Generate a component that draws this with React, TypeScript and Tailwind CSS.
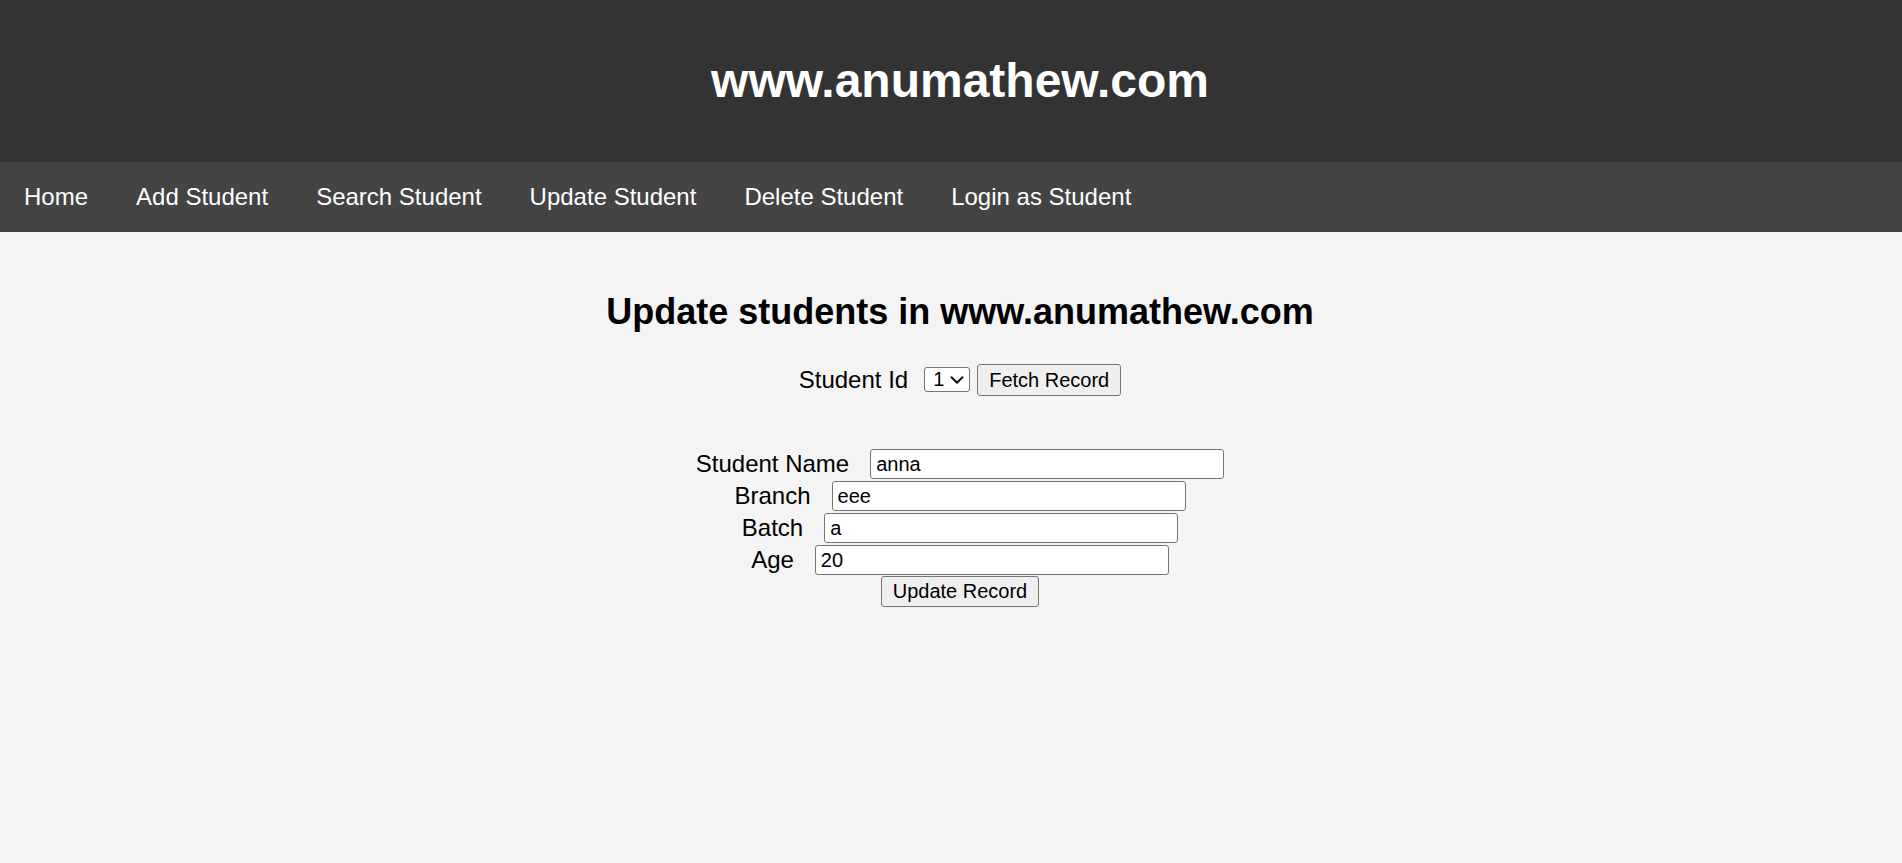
import { ChevronDown } from 'lucide-react';

const navLinks = ['Home', 'Add Student', 'Search Student', 'Update Student', 'Delete Student', 'Login as Student'];

const fields = [
  { label: 'Student Name', value: 'anna' },
  { label: 'Branch', value: 'eee' },
  { label: 'Batch', value: 'a' },
  { label: 'Age', value: '20' },
];

export default function App() {
  return (
    <div className="w-full min-h-screen overflow-hidden bg-[#f4f4f4] font-['Liberation_Sans',Arial,sans-serif] text-black">
      <div className="w-[1920px]">
        {/* Site header */}
        <header className="h-[162px] bg-[#333333] flex items-center justify-center">
          <h1 className="text-[48px] leading-[56px] font-bold text-white">www.anumathew.com</h1>
        </header>

        {/* Navigation */}
        <nav className="h-[70px] bg-[#444444] flex items-center">
          {navLinks.map((link) => (
            <a key={link} href="#" className="px-6 text-[24px] leading-[28px] text-white">
              {link}
            </a>
          ))}
        </nav>

        {/* Update form */}
        <main className="flex flex-col items-center pt-[59px]">
          <h2 className="text-[36px] leading-[42px] font-bold">Update students in www.anumathew.com</h2>

          <div className="mt-[31px] h-[32px] flex items-center">
            <span className="text-[24px] leading-[28px]">Student Id</span>
            <div className="relative ml-[16px]">
              <select
                defaultValue="1"
                className="appearance-none h-[25px] w-[46px] pl-[8px] bg-white border border-[#767676] rounded-[3px] text-[20px] leading-[23px] text-black"
              >
                <option value="1">1</option>
                <option value="2">2</option>
              </select>
              <ChevronDown
                className="absolute right-[2px] top-[2px] w-[22px] h-[22px] text-[#111] pointer-events-none"
                strokeWidth={2.2}
              />
            </div>
            <button className="ml-[7px] h-[32px] px-[11px] bg-[#efefef] border border-[#767676] rounded-[3px] text-[20px] leading-[23px] text-black">
              Fetch Record
            </button>
          </div>

          <div className="mt-[52px] flex flex-col items-center">
            {fields.map((f) => (
              <div key={f.label} className="h-[32px] flex items-center gap-[21px]">
                <span className="text-[24px] leading-[28px]">{f.label}</span>
                <input
                  type="text"
                  defaultValue={f.value}
                  className="h-[30px] w-[354px] pl-[5px] bg-white border border-[#767676] rounded-[3px] text-[20px] leading-[23px] text-black outline-none"
                />
              </div>
            ))}
            <button className="h-[31px] px-[11px] bg-[#efefef] border border-[#767676] rounded-[3px] text-[20px] leading-[23px] text-black">
              Update Record
            </button>
          </div>
        </main>
      </div>
    </div>
  );
}
